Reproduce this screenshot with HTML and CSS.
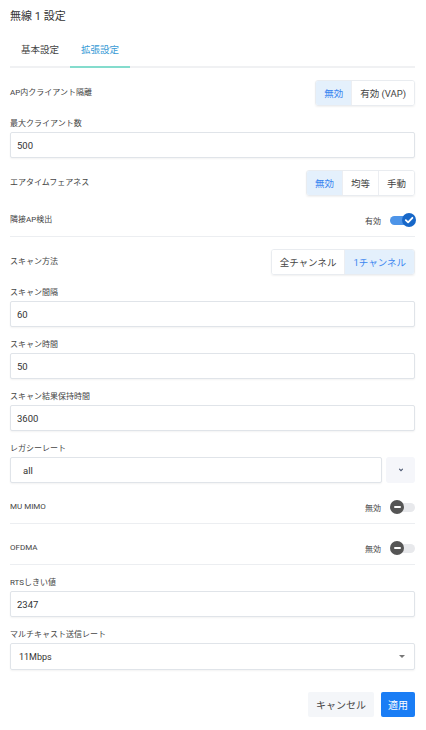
FILE: index.html
```html
<!DOCTYPE html>
<html lang="ja">
<head>
    <meta charset="UTF-8">
    <meta name="viewport" content="width=device-width, initial-scale=1.0">
    <title>無線 1 設定</title>
    <link rel="stylesheet" href="styles.css">
</head>
<body>
    <div class="panel">
        <h1 class="title">無線 1 設定</h1>

        <div class="tabs">
            <button class="tab">基本設定</button>
            <button class="tab active">拡張設定</button>
        </div>

        <!-- AP isolation -->
        <div class="row">
            <span class="label">AP内クライアント隔離</span>
            <div class="segmented">
                <button class="active">無効</button>
                <button>有効 (VAP)</button>
            </div>
        </div>

        <div class="field">
            <label class="label">最大クライアント数</label>
            <input class="input" type="text" value="500">
        </div>

        <div class="row">
            <span class="label">エアタイムフェアネス</span>
            <div class="segmented">
                <button class="active">無効</button>
                <button>均等</button>
                <button>手動</button>
            </div>
        </div>

        <div class="row switch-row">
            <span class="label">隣接AP検出</span>
            <div class="switch-wrap">
                <span class="switch-text">有効</span>
                <span class="switch on">
                    <span class="knob">
                        <svg viewBox="0 0 14 14" width="14" height="14"><path d="M3.8 7.2 L6.1 9.4 L10.4 4.8" fill="none" stroke="#fff" stroke-width="1.8" stroke-linecap="round" stroke-linejoin="round"/></svg>
                    </span>
                </span>
            </div>
        </div>

        <div class="row">
            <span class="label">スキャン方法</span>
            <div class="segmented">
                <button>全チャンネル</button>
                <button class="active">1チャンネル</button>
            </div>
        </div>

        <div class="field">
            <label class="label">スキャン間隔</label>
            <input class="input" type="text" value="60">
        </div>

        <div class="field">
            <label class="label">スキャン時間</label>
            <input class="input" type="text" value="50">
        </div>

        <div class="field">
            <label class="label">スキャン結果保持時間</label>
            <input class="input" type="text" value="3600">
        </div>

        <div class="field">
            <label class="label">レガシーレート</label>
            <div class="combo">
                <input class="input combo-input" type="text" value="all">
                <button class="combo-btn">
                    <svg viewBox="0 0 8 6" width="8" height="6"><path d="M2.5 2.2 L4 3.7 L5.5 2.2" fill="none" stroke="#4a5670" stroke-width="1.1" stroke-linecap="round"/></svg>
                </button>
            </div>
        </div>

        <div class="row switch-row">
            <span class="label">MU MIMO</span>
            <div class="switch-wrap">
                <span class="switch-text">無効</span>
                <span class="switch off"><span class="knob"><i class="minus"></i></span></span>
            </div>
        </div>

        <div class="row switch-row">
            <span class="label">OFDMA</span>
            <div class="switch-wrap">
                <span class="switch-text">無効</span>
                <span class="switch off"><span class="knob"><i class="minus"></i></span></span>
            </div>
        </div>

        <div class="field">
            <label class="label">RTSしきい値</label>
            <input class="input" type="text" value="2347">
        </div>

        <div class="field">
            <label class="label">マルチキャスト送信レート</label>
            <div class="select">
                <span>11Mbps</span>
                <i class="caret"></i>
            </div>
        </div>

        <div class="actions">
            <button class="btn-cancel">キャンセル</button>
            <button class="btn-apply">適用</button>
        </div>
    </div>
</body>
</html>
```

FILE: styles.css
```css
body {
    font-family: Roboto, 'Noto Sans CJK JP', sans-serif;
    background-color: #ffffff;
    color: #333333;
    margin: 0;
    padding: 0;
}

.panel {
    padding: 0 11px 20px 10px;
}

.title {
    font-size: 11px;
    font-weight: normal;
    line-height: 16px;
    margin: 0;
    padding-top: 9px;
    color: #333333;
}

.tabs {
    display: flex;
    margin-top: 10px;
    border-bottom: 2px solid #f0f1f3;
}

.tab {
    width: 60px;
    padding: 7px 0 8px;
    margin-bottom: -2px;
    border: none;
    border-bottom: 2px solid transparent;
    background: none;
    font-family: inherit;
    font-size: 9.5px;
    line-height: 16px;
    color: #444444;
}

.tab.active {
    color: #3a9bd6;
    border-bottom-color: #84dccd;
}

.label {
    font-size: 8px;
    line-height: 12px;
    color: #444444;
}

.row {
    display: flex;
    justify-content: space-between;
    align-items: center;
    margin-top: 12px;
}

.segmented {
    display: flex;
    height: 26px;
    border: 1px solid #e9ecf0;
    border-radius: 3px;
    box-shadow: 0 1px 2px rgba(0, 0, 0, 0.06);
    overflow: hidden;
    box-sizing: border-box;
}

.segmented button {
    border: none;
    border-left: 1px solid #eceef2;
    background: #ffffff;
    font-family: inherit;
    font-size: 9.5px;
    color: #444444;
    padding: 0 8px;
}

.segmented button:first-child {
    border-left: none;
}

.segmented button.active {
    background: #e4f0fc;
    color: #3b86f0;
}

.field {
    margin-top: 12px;
}

.field .label {
    display: block;
    margin-bottom: 2px;
}

.input {
    display: block;
    width: 100%;
    height: 26px;
    box-sizing: border-box;
    border: 1px solid #e0e4e9;
    border-radius: 2px;
    box-shadow: 0 1px 2px rgba(0, 0, 0, 0.05);
    padding: 0 6px;
    font-family: inherit;
    font-size: 9.5px;
    color: #333333;
    background: #ffffff;
}

.combo {
    display: flex;
    gap: 4px;
}

.combo-input {
    flex: 1;
    padding-left: 12px;
}

.combo-btn {
    width: 29px;
    height: 26px;
    border: none;
    border-radius: 3px;
    background: #f5f6fa;
    display: flex;
    align-items: center;
    justify-content: center;
    padding: 0;
}

.switch-row {
    height: 24px;
    padding-bottom: 4px;
    border-bottom: 1px solid #eceef1;
}

.switch-wrap {
    display: flex;
    align-items: center;
    gap: 9px;
}

.switch-text {
    font-size: 8px;
    color: #444444;
}

.switch {
    position: relative;
    width: 25px;
    height: 9px;
    border-radius: 5px;
}

.switch.on {
    background: #4d94e8;
}

.switch.off {
    background: #e8e9ec;
}

.knob {
    position: absolute;
    top: -3px;
    width: 14px;
    height: 14px;
    border-radius: 50%;
    display: flex;
    align-items: center;
    justify-content: center;
}

.switch.on .knob {
    right: -1px;
    background: #1767c8;
}

.switch.off .knob {
    left: 0;
    background: #555555;
}

.minus {
    width: 7px;
    height: 2px;
    background: #ffffff;
    border-radius: 1px;
}

.select {
    display: flex;
    justify-content: space-between;
    align-items: center;
    height: 27px;
    box-sizing: border-box;
    border: 1px solid #e0e4e9;
    border-radius: 2px;
    box-shadow: 0 1px 2px rgba(0, 0, 0, 0.05);
    padding: 0 9px 0 8px;
    font-size: 9px;
    color: #333333;
}

.caret {
    width: 0;
    height: 0;
    border-left: 3px solid transparent;
    border-right: 3px solid transparent;
    border-top: 3px solid #777777;
}

.actions {
    display: flex;
    justify-content: flex-end;
    gap: 7px;
    margin-top: 22px;
}

.btn-cancel, .btn-apply {
    height: 25px;
    border: none;
    border-radius: 2px;
    font-family: inherit;
    font-size: 10px;
}

.btn-cancel {
    background: #f4f6f9;
    color: #444444;
    padding: 0 8px;
}

.btn-apply {
    background: #1a7df5;
    color: #ffffff;
    padding: 0 7px;
}
```
